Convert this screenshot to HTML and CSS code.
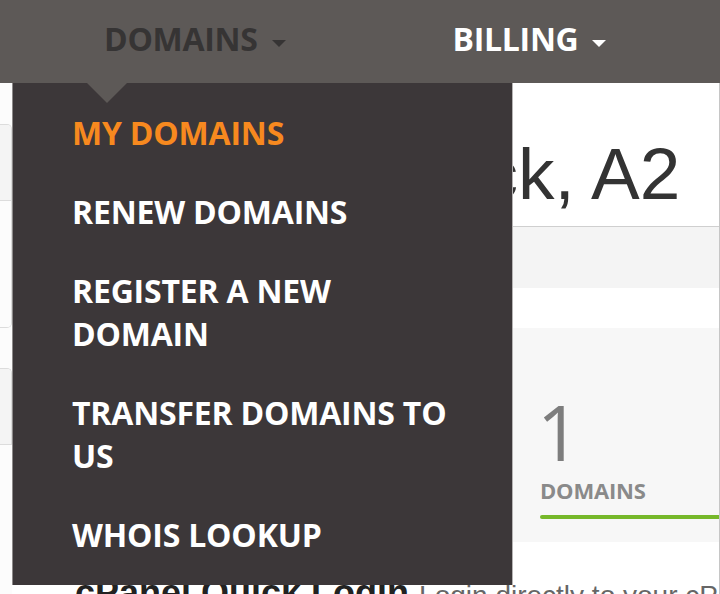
FILE: index.html
```html
<!DOCTYPE html>
<html lang="en">
<head>
    <meta charset="UTF-8">
    <meta name="viewport" content="width=device-width, initial-scale=1.0">
    <title>Client Area</title>
    <link rel="stylesheet" href="styles.css">
</head>
<body>
    <div class="topnav">
        <div class="navItem active">
            DOMAINS<span class="caret"></span>
            <ul class="dropdown">
                <li class="current">MY DOMAINS</li>
                <li>RENEW DOMAINS</li>
                <li>REGISTER A NEW DOMAIN</li>
                <li>TRANSFER DOMAINS TO US</li>
                <li>WHOIS LOOKUP</li>
            </ul>
        </div>
        <div class="navItem">
            BILLING<span class="caret"></span>
        </div>
    </div>
    <div class="page">
        <!-- 侧边栏面板，只露出右边一点 -->
        <div class="sidebar">
            <div class="panel">
                <div class="panelHead"></div>
                <div class="panelBody"></div>
            </div>
            <div class="panel open">
                <div class="panelHead"></div>
            </div>
        </div>
        <div class="content">
            <h1 class="welcome">Welcome Back, A2</h1>
            <div class="crumbs"></div>
            <div class="stats">
                <div class="stat"><div class="num">2</div><div class="label">SERVICES</div><span class="bar blue"></span></div>
                <div class="stat"><div class="num">0</div><div class="label">QUOTES</div><span class="bar red"></span></div>
                <div class="stat"><div class="num">0</div><div class="label">TICKETS</div><span class="bar orange"></span></div>
                <div class="stat"><div class="num">1</div><div class="label">DOMAINS</div><span class="bar green"></span></div>
            </div>
            <div class="quick">
                <b>cPanel Quick Login</b> <span>Login directly to your cPanel account</span>
            </div>
        </div>
    </div>
</body>
</html>
```
FILE: styles.css
```css
body,ul{
    margin: 0px;
}
ul{
    padding-left: 0px;
    list-style: none;
}
body{
    font-family: "Liberation Sans", Arial, sans-serif;
    color: #333;
    background-color: #fff;
    overflow: hidden;
}
.topnav{
    height: 83px;
    box-sizing: border-box;
    padding: 17px 0 0 104px;
    background-color: #5d5957;
    display: flex;
    align-items: flex-start;
    gap: 167px;
    font-family: "Open Sans", sans-serif;
    font-weight: 700;
    font-size: 32px;
    line-height: 44px;
    letter-spacing: -0.3px;
    color: #fff;
}
.navItem{
    display: flex;
    align-items: flex-start;
}
.navItem.active{
    color: #363434;
}
.caret{
    width: 0;
    height: 0;
    margin: 23px 0 0 14px;
    border-left: 7px solid transparent;
    border-right: 7px solid transparent;
    border-top: 7px solid currentColor;
}
/* 下拉菜单盖在页面上面 */
.dropdown{
    position: absolute;
    top: 83px;
    left: 12px;
    width: 501px;
    box-sizing: border-box;
    padding: 10px 0 11px 59px;
    background-color: #3c3739;
    border-left: 1px solid #8d8a8a;
    border-right: 1px solid #b5b3b3;
    letter-spacing: -0.2px;
    z-index: 3;
}
.dropdown::before{
    content: "";
    position: absolute;
    top: 0;
    left: 74px;
    border-left: 20px solid transparent;
    border-right: 20px solid transparent;
    border-top: 20px solid #5d5957;
}
.dropdown li{
    width: 392px;
    padding: 18px 0;
    line-height: 43px;
    color: #fff;
}
.dropdown li.current{
    color: #f7891f;
}
.page{
    display: flex;
    height: 511px;
}
.sidebar{
    width: 12px;
    flex-shrink: 0;
    padding-top: 41px;
    background-color: #fcfcfc;
}
.panel{
    border: 1px solid #dcdcdc;
    border-left: none;
    border-radius: 0 5px 5px 0;
    margin-bottom: 40px;
    overflow: hidden;
}
.panel.open{
    border-bottom: none;
    border-radius: 0 5px 0 0;
}
.panelHead{
    height: 75px;
    background-color: #f4f4f4;
    border-bottom: 1px solid #dcdcdc;
}
.panelBody{
    height: 126px;
    background-color: #fcfcfc;
}
.content{
    flex: 1;
    min-width: 0;
    overflow: hidden;
    border-right: 1px solid #c6c6c6;
}
.welcome{
    margin: 54px 0 0;
    padding: 0 0 16px 57px;
    font-size: 73px;
    line-height: 73px;
    font-weight: 400;
    color: #333;
    white-space: nowrap;
    border-bottom: 1px solid #cfcfcf;
}
.crumbs{
    height: 61px;
    background-color: #f4f4f4;
}
.stats{
    margin-top: 40px;
    height: 214px;
    box-sizing: border-box;
    padding: 66px 0 0;
    background-color: #f7f7f7;
    display: grid;
    grid-template-columns: repeat(3, 1fr) 179px;
    column-gap: 28px;
    font-family: "Open Sans", sans-serif;
}
.num{
    margin-left: -3px;
    font-size: 76px;
    line-height: 76px;
    color: #7d7d7d;
}
.label{
    margin-top: 6px;
    font-size: 22px;
    font-weight: 700;
    line-height: 28px;
    letter-spacing: -0.2px;
    color: #8a8a8a;
}
.bar{
    display: block;
    height: 4px;
    margin-top: 11px;
    border-radius: 2px 0 0 2px;
}
.blue{ background-color: #3a8fd9; }
.red{ background-color: #d9534f; }
.orange{ background-color: #f0ad4e; }
.green{ background-color: #76b82a; }
.quick{
    padding: 31px 0 0 63px;
    font-size: 36px;
    line-height: 40px;
    white-space: nowrap;
    color: #222;
}
.quick span{
    font-size: 28px;
    color: #666;
}
```
